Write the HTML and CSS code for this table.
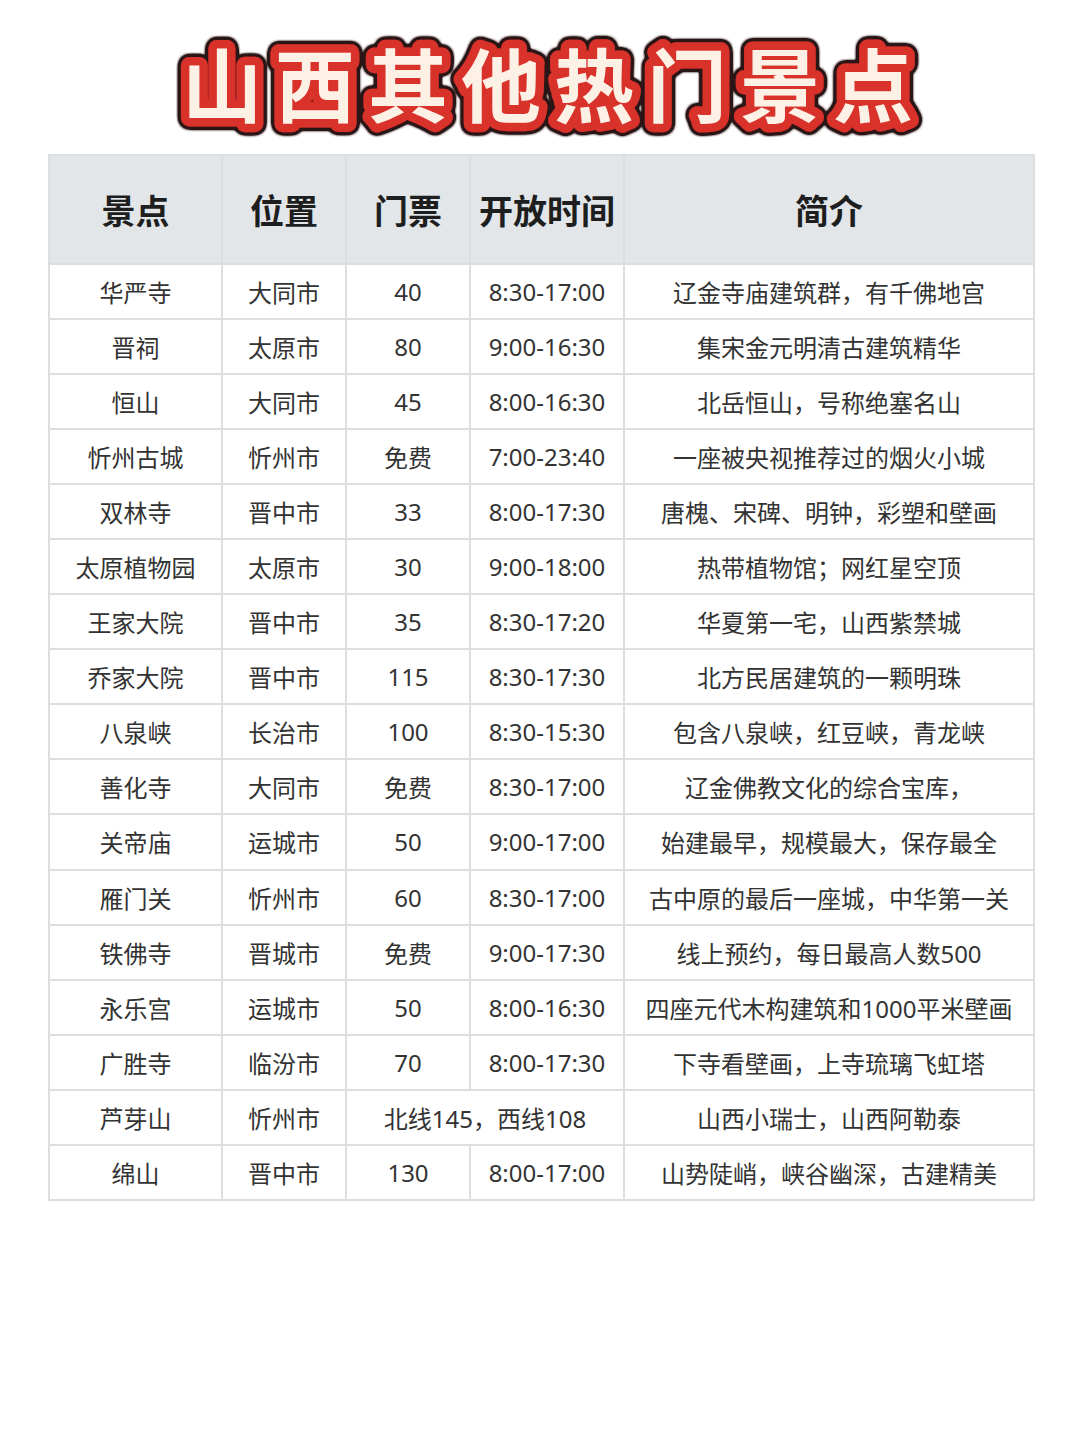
FILE: index.html
```html
<!DOCTYPE html>
<html lang="zh-CN">
<head>
<meta charset="utf-8">
<title>山西其他热门景点</title>
<link rel="stylesheet" href="styles.css">
</head>
<body>
<div class="page">
  <header class="title-wrap">
    <svg class="title-svg" width="985" height="155" viewBox="0 0 985 155">
      <defs>
        <filter id="darkOutline" x="-10%" y="-40%" width="120%" height="180%">
          <feGaussianBlur in="SourceAlpha" stdDeviation="2.2" result="blur"/>
          <feComponentTransfer in="blur" result="thick">
            <feFuncA type="linear" slope="12" intercept="0"/>
          </feComponentTransfer>
          <feFlood flood-color="#2a1614" result="dark"/>
          <feComposite in="dark" in2="thick" operator="in" result="outline"/>
          <feMerge>
            <feMergeNode in="outline"/>
            <feMergeNode in="SourceGraphic"/>
          </feMerge>
        </filter>
      </defs>
      <text class="title-text" x="506" y="116" text-anchor="middle" filter="url(#darkOutline)">山西其他热门景点</text>
    </svg>
  </header>
  <table class="spots">
    <colgroup>
      <col class="c1"><col class="c2"><col class="c3"><col class="c4"><col class="c5">
    </colgroup>
    <thead>
      <tr><th>景点</th><th>位置</th><th>门票</th><th>开放时间</th><th>简介</th></tr>
    </thead>
    <tbody>
      <tr><td>华严寺</td><td>大同市</td><td>40</td><td>8:30-17:00</td><td>辽金寺庙建筑群，有千佛地宫</td></tr>
      <tr><td>晋祠</td><td>太原市</td><td>80</td><td>9:00-16:30</td><td>集宋金元明清古建筑精华</td></tr>
      <tr><td>恒山</td><td>大同市</td><td>45</td><td>8:00-16:30</td><td>北岳恒山，号称绝塞名山</td></tr>
      <tr><td>忻州古城</td><td>忻州市</td><td>免费</td><td>7:00-23:40</td><td>一座被央视推荐过的烟火小城</td></tr>
      <tr><td>双林寺</td><td>晋中市</td><td>33</td><td>8:00-17:30</td><td>唐槐、宋碑、明钟，彩塑和壁画</td></tr>
      <tr><td>太原植物园</td><td>太原市</td><td>30</td><td>9:00-18:00</td><td>热带植物馆；网红星空顶</td></tr>
      <tr><td>王家大院</td><td>晋中市</td><td>35</td><td>8:30-17:20</td><td>华夏第一宅，山西紫禁城</td></tr>
      <tr><td>乔家大院</td><td>晋中市</td><td>115</td><td>8:30-17:30</td><td>北方民居建筑的一颗明珠</td></tr>
      <tr><td>八泉峡</td><td>长治市</td><td>100</td><td>8:30-15:30</td><td>包含八泉峡，红豆峡，青龙峡</td></tr>
      <tr><td>善化寺</td><td>大同市</td><td>免费</td><td>8:30-17:00</td><td>辽金佛教文化的综合宝库，</td></tr>
      <tr><td>关帝庙</td><td>运城市</td><td>50</td><td>9:00-17:00</td><td>始建最早，规模最大，保存最全</td></tr>
      <tr><td>雁门关</td><td>忻州市</td><td>60</td><td>8:30-17:00</td><td>古中原的最后一座城，中华第一关</td></tr>
      <tr><td>铁佛寺</td><td>晋城市</td><td>免费</td><td>9:00-17:30</td><td>线上预约，每日最高人数500</td></tr>
      <tr><td>永乐宫</td><td>运城市</td><td>50</td><td>8:00-16:30</td><td>四座元代木构建筑和1000平米壁画</td></tr>
      <tr><td>广胜寺</td><td>临汾市</td><td>70</td><td>8:00-17:30</td><td>下寺看壁画，上寺琉璃飞虹塔</td></tr>
      <tr><td>芦芽山</td><td>忻州市</td><td colspan="2">北线145，西线108</td><td>山西小瑞士，山西阿勒泰</td></tr>
      <tr><td>绵山</td><td>晋中市</td><td>130</td><td>8:00-17:00</td><td>山势陡峭，峡谷幽深，古建精美</td></tr>
    </tbody>
  </table>
</div>
</body>
</html>
```

FILE: styles.css
```css
html, body {
  margin: 0;
  padding: 0;
  background: #ffffff;
}

.page {
  width: 1080px;
  min-height: 1440px;
  box-sizing: border-box;
  padding: 0 47px 0 48px;
  font-family: "Noto Sans", "Noto Sans CJK SC", sans-serif;
}

.title-wrap {
  height: 154px;
  display: flex;
}

.title-svg {
  display: block;
  overflow: visible;
}

.title-text {
  font-family: "Noto Sans CJK SC", sans-serif;
  font-weight: 700;
  font-size: 80px;
  letter-spacing: 13px;
  fill: #fdf1e6;
  stroke: #d8302b;
  stroke-width: 17px;
  stroke-linejoin: round;
  stroke-linecap: round;
  paint-order: stroke fill;
}

.spots {
  width: 985px;
  border-collapse: collapse;
  table-layout: fixed;
  border: 2px solid #dcdfe2;
}

.c1 { width: 173px; }
.c2 { width: 124px; }
.c3 { width: 124px; }
.c4 { width: 154px; }
.c5 { width: 410px; }

.spots th,
.spots td {
  border: 2px solid #dcdfe2;
  text-align: center;
  padding: 0;
  white-space: nowrap;
}

.spots thead th {
  height: 107px;
  background: #e2e6e9;
  font-family: "Noto Sans CJK SC", sans-serif;
  font-weight: 700;
  font-size: 34px;
  color: #1e1e1e;
}

.spots tbody td {
  height: 53.05px;
  font-size: 24px;
  color: #333333;
  font-family: "Noto Sans", "Noto Sans CJK SC", sans-serif;
}
```
